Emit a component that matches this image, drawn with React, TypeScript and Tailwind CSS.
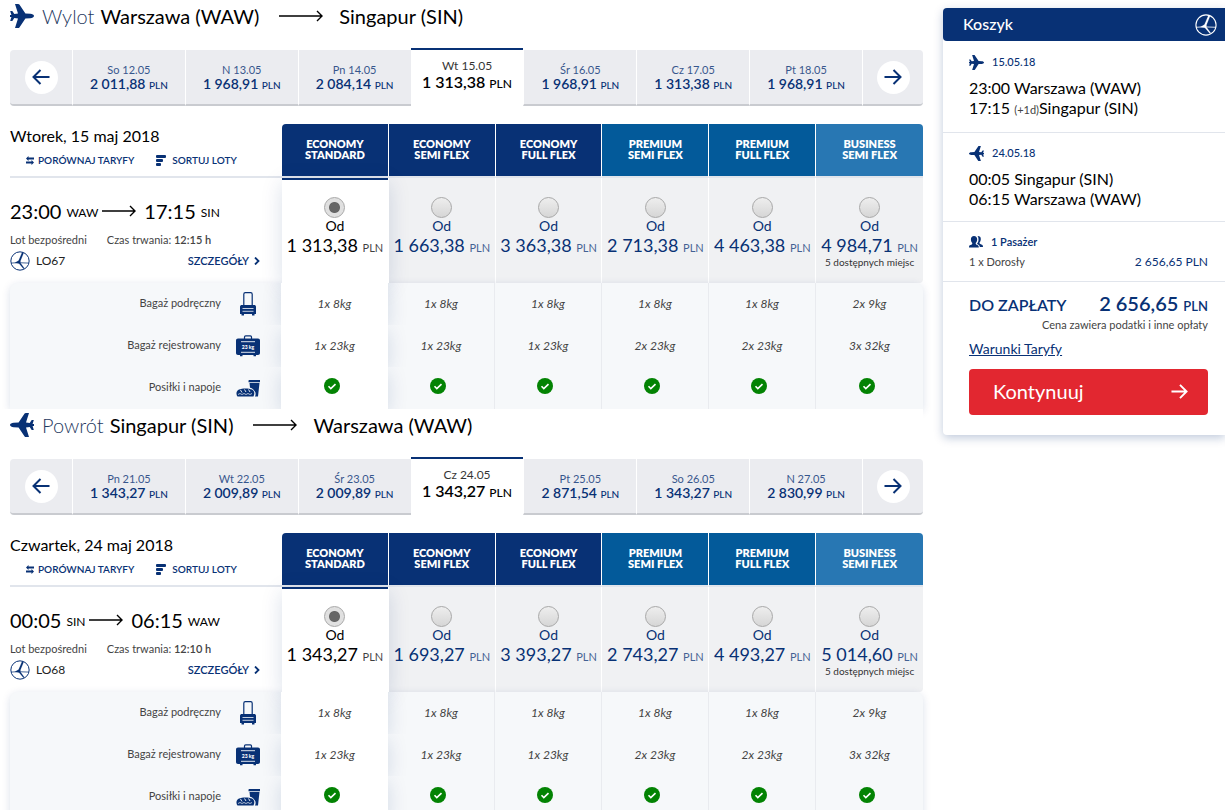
import { useState } from "react";
import clsx from "clsx";

type Fare = { name: string[]; color: string; price: string; seats?: string };

type Day = { label: string; price: string };

type Flight = {
  id: string;
  direction: string;
  inbound?: boolean;
  from: string;
  fromCode: string;
  to: string;
  toCode: string;
  days: Day[];
  date: string;
  departure: string;
  arrival: string;
  duration: string;
  number: string;
  fares: Fare[];
};

const fareTypes = [
  { name: ["ECONOMY", "STANDARD"], color: "bg-[#083175]" },
  { name: ["ECONOMY", "SEMI FLEX"], color: "bg-[#083175]" },
  { name: ["ECONOMY", "FULL FLEX"], color: "bg-[#083175]" },
  { name: ["PREMIUM", "SEMI FLEX"], color: "bg-[#035a9a]" },
  { name: ["PREMIUM", "FULL FLEX"], color: "bg-[#035a9a]" },
  { name: ["BUSINESS", "SEMI FLEX"], color: "bg-[#2877b3]" },
];

const withPrices = (prices: string[]): Fare[] =>
  fareTypes.map((fare, i) => ({
    ...fare,
    price: prices[i],
    seats: i === 5 ? "5 dostępnych miejsc" : undefined,
  }));

const flights: Flight[] = [
  {
    id: "outbound",
    direction: "Wylot",
    from: "Warszawa",
    fromCode: "WAW",
    to: "Singapur",
    toCode: "SIN",
    days: [
      { label: "So 12.05", price: "2 011,88" },
      { label: "N 13.05", price: "1 968,91" },
      { label: "Pn 14.05", price: "2 084,14" },
      { label: "Wt 15.05", price: "1 313,38" },
      { label: "Śr 16.05", price: "1 968,91" },
      { label: "Cz 17.05", price: "1 313,38" },
      { label: "Pt 18.05", price: "1 968,91" },
    ],
    date: "Wtorek, 15 maj 2018",
    departure: "23:00",
    arrival: "17:15",
    duration: "12:15 h",
    number: "LO67",
    fares: withPrices([
      "1 313,38",
      "1 663,38",
      "3 363,38",
      "2 713,38",
      "4 463,38",
      "4 984,71",
    ]),
  },
  {
    id: "inbound",
    direction: "Powrót",
    inbound: true,
    from: "Singapur",
    fromCode: "SIN",
    to: "Warszawa",
    toCode: "WAW",
    days: [
      { label: "Pn 21.05", price: "1 343,27" },
      { label: "Wt 22.05", price: "2 009,89" },
      { label: "Śr 23.05", price: "2 009,89" },
      { label: "Cz 24.05", price: "1 343,27" },
      { label: "Pt 25.05", price: "2 871,54" },
      { label: "So 26.05", price: "1 343,27" },
      { label: "N 27.05", price: "2 830,99" },
    ],
    date: "Czwartek, 24 maj 2018",
    departure: "00:05",
    arrival: "06:15",
    duration: "12:10 h",
    number: "LO68",
    fares: withPrices([
      "1 343,27",
      "1 693,27",
      "3 393,27",
      "2 743,27",
      "4 493,27",
      "5 014,60",
    ]),
  },
];

const handBaggage = ["1x 8kg", "1x 8kg", "1x 8kg", "1x 8kg", "1x 8kg", "2x 9kg"];
const checkedBaggage = [
  "1x 23kg",
  "1x 23kg",
  "1x 23kg",
  "2x 23kg",
  "2x 23kg",
  "3x 32kg",
];

function PlaneIcon({ className }: { className?: string }) {
  return (
    <svg viewBox="0 0 24 24" fill="currentColor" className={className}>
      <path d="M24 12c0 1.200-1.800 2.200-3.600 2.200l-5 .3L9.400 23.400C9.100 23.800 8.700 24 8.200 24H5l3-9.500-3.700-.5L2.300 17H.2L1.400 13H0v-2h1.400L.2 7h2.100l2 3L8 9.500 5 0h3.200c.5 0 .9.200 1.200.6l6 8.900 5 .3C22.200 9.800 24 10.800 24 12z" />
    </svg>
  );
}

function LongArrow({ className }: { className?: string }) {
  return (
    <svg
      viewBox="0 0 44 12"
      fill="none"
      stroke="currentColor"
      strokeWidth="1.4"
      preserveAspectRatio="xMaxYMid slice"
      className={className}
    >
      <path d="M0 6h43M38 1l5 5-5 5" />
    </svg>
  );
}

function ArrowIcon({ className }: { className?: string }) {
  return (
    <svg
      viewBox="0 0 18 18"
      fill="none"
      stroke="currentColor"
      className={className}
    >
      <path d="M0.500 9h16M9.500 2l7 7-7 7" />
    </svg>
  );
}

function CraneLogo({ className }: { className?: string }) {
  return (
    <svg viewBox="0 0 24 24" fill="none" stroke="currentColor" className={className}>
      <circle cx="12" cy="12" r="11" strokeWidth="1.200" />
      <path d="M1.500 14.500L9 14l13.500.500" strokeWidth="0.900" />
      <path
        d="M14.600 1.500L10.400 11.500 6 14.200l4.800.8 5.600 6.500.8-.8-4.800-6.600.2-2.400L16.400 2.300z"
        fill="currentColor"
        strokeWidth="0.200"
      />
    </svg>
  );
}

function TrolleyIcon() {
  return (
    <svg viewBox="0 0 24 24" className="size-6 text-[#083175]" fill="currentColor">
      <path
        d="M7.800 14V2.200C7.800 1.200 8.300.6 9.300.6h5.400c1 0 1.500.6 1.500 1.600V14"
        fill="none"
        stroke="currentColor"
        strokeWidth="1.200"
      />
      <path d="M6 13h12c1.200 0 2 .6 2 1.800V22h-1.500v1.500H16V22H8v1.500H5.500V22H4v-7.200C4 13.600 4.800 13 6 13z" />
      <path d="M6.500 16.500h11M6.500 19.300h11" stroke="#f6f8fa" strokeWidth="0.800" />
    </svg>
  );
}

function SuitcaseIcon() {
  return (
    <svg viewBox="0 0 24 24" className="size-6 text-[#083175]" fill="currentColor">
      <path
        d="M8.500 5V3c0-.8.500-1.200 1.200-1.200h4.600c.7 0 1.200.4 1.200 1.200v2"
        fill="none"
        stroke="currentColor"
        strokeWidth="1.200"
      />
      <path d="M2 4.500h20c1.200 0 2 .8 2 2V19c0 1.200-.8 2-2 2h-2v1.300h-2.500V21h-11v1.300H4V21H2c-1.200 0-2-.8-2-2V6.500c0-1.200.8-2 2-2z" />
      <path d="M5 7.700h14M5 18.300h14" stroke="#f6f8fa" strokeWidth="0.900" />
      <text
        x="12"
        y="15"
        textAnchor="middle"
        fill="#fff"
        fontSize="5"
        fontWeight="900"
      >
        23 kg
      </text>
    </svg>
  );
}

function MealIcon() {
  return (
    <svg viewBox="0 0 24 24" className="size-6 text-[#083175]" fill="currentColor">
      <path d="M13.500 4H24v2.200H12.500V5c0-.6.400-1 1-1zM13.500 7h10L22 20.500h-3c.8-1.500 1-4-.5-5.500C17.500 13 15.500 12 14 11.800z" />
      <path d="M3 13.500C6 12 13 12 16 13.500c2.800 1.500 2.800 4.500 1.500 7h-16C0 18.500-.2 15 3 13.500z" />
      <path
        d="M4.500 14l1.500 2.500M8.500 13.500l1.500 2.500M12.500 13.500l1.500 2.500"
        stroke="#f6f8fa"
        strokeWidth="0.900"
      />
      <path
        d="M2 18.500l2-1 2 1 2-1 2 1 2-1 2 1 2-1"
        fill="none"
        stroke="#f6f8fa"
        strokeWidth="0.700"
      />
    </svg>
  );
}

function CheckIcon() {
  return (
    <svg viewBox="0 0 16 16" className="size-4" role="img" aria-label="Tak">
      <circle cx="8" cy="8" r="8" fill="#038303" />
      <path d="M4.500 8.300l2.300 2.300 4.700-4.500" fill="none" stroke="#fff" strokeWidth="1.600" />
    </svg>
  );
}

function DayPicker({ days }: { days: Day[] }) {
  const [active, setActive] = useState(3);

  return (
    <div className="flex items-end text-[#083175]">
      <div className="flex h-14 w-[62px] items-center justify-center rounded-l border-b-2 border-[#c9cbd0] bg-[#ebecf0]">
        <button
          aria-label="Wcześniejsze dni"
          className="flex size-[33px] items-center justify-center rounded-full bg-white"
        >
          <ArrowIcon className="size-[18px] -scale-x-100 stroke-2" />
        </button>
      </div>
      <div className="grid flex-1 grid-cols-7 items-end">
        {days.map((day, i) => (
          <button
            key={day.label}
            onClick={() => setActive(i)}
            className={clsx(
              "flex min-w-0 flex-col items-center whitespace-nowrap",
              i === active
                ? "h-[58px] border-t-2 border-[#083175] bg-white pt-2 text-black"
                : "h-14 border-b-2 border-l border-b-[#c9cbd0] border-l-white bg-[#ebecf0] pt-3",
            )}
          >
            <span
              className={clsx(
                "leading-4 opacity-80",
                i === active ? "text-[12px]" : "text-[11px]",
              )}
            >
              {day.label}
            </span>
            <span
              className={clsx(
                "font-semibold",
                i === active ? "text-[16px] leading-4" : "text-[14px] leading-3",
              )}
            >
              {day.price}{" "}
              <span
                className={clsx(
                  "font-medium",
                  i === active ? "text-[12px]" : "text-[10px]",
                )}
              >
                PLN
              </span>
            </span>
          </button>
        ))}
      </div>
      <div className="flex h-14 w-[61px] items-center justify-center rounded-r border-b-2 border-l border-b-[#c9cbd0] border-l-white bg-[#ebecf0]">
        <button
          aria-label="Późniejsze dni"
          className="flex size-[33px] items-center justify-center rounded-full bg-white"
        >
          <ArrowIcon className="size-[18px] stroke-2" />
        </button>
      </div>
    </div>
  );
}

function FareTable({
  flight,
  selected,
  onSelect,
}: {
  flight: Flight;
  selected: number;
  onSelect: (index: number) => void;
}) {
  return (
    <table className="w-full table-fixed border-separate border-spacing-0">
      <colgroup>
        <col className="w-[272px]" />
        {flight.fares.map((fare, i) => (
          <col key={i} />
        ))}
      </colgroup>
      <thead>
        <tr>
          <td className="h-[54px] border-b-2 border-[#e1e5ec] p-0 align-top">
            <div className="pt-1 text-[16px] leading-4">{flight.date}</div>
            <div className="flex gap-[22px] pt-2 pl-4 text-[10px] leading-4 font-semibold text-[#083175]">
              <button className="flex items-center gap-1">
                <svg viewBox="0 0 8 9" className="h-[9px] w-2" fill="currentColor">
                  <path d="M0 2.500L2.500 0v1.500H8v2H2.500V5zM8 6.500L5.500 4v1.500H0v2h5.500V9z" />
                </svg>
                PORÓWNAJ TARYFY
              </button>
              <button className="flex items-center gap-[6px]">
                <svg viewBox="0 0 10 11" className="h-[11px] w-[10px]" fill="currentColor">
                  <rect width="10" height="3" rx="1" />
                  <rect y="4" width="7" height="3" rx="1" />
                  <rect y="8" width="5" height="3" rx="1" />
                </svg>
                SORTUJ LOTY
              </button>
            </div>
          </td>
          {flight.fares.map((fare, i) => (
            <th
              key={i}
              scope="col"
              className={clsx(
                "border-r border-b-2 border-r-white border-b-[#e1e5ec] bg-clip-padding p-0 pb-[2px] text-[11px] font-extrabold text-white last:border-r-0",
                fare.color,
                i === 0 && "rounded-tl",
                i === 5 && "rounded-tr",
              )}
            >
              <div className="leading-[11px]">{fare.name[0]}</div>
              <div className="leading-[11px]">{fare.name[1]}</div>
            </th>
          ))}
        </tr>
      </thead>
      <tbody>
        <tr>
          <th
            scope="row"
            className="h-[105px] p-0 pr-[22px] align-top font-normal"
          >
            <div className="flex items-center pt-[19px] text-[20px] leading-6">
              {flight.departure}
              <span className="pt-1 pl-[5px] text-[12px]">{flight.fromCode}</span>
              <LongArrow className="mx-1 h-3 w-[34px]" />
              <span className="pl-1">{flight.arrival}</span>
              <span className="pt-1 pl-[5px] text-[12px]">{flight.toCode}</span>
            </div>
            <div className="flex gap-5 pt-[7px] text-[11px] leading-4 text-[#444]">
              <span>Lot bezpośredni</span>
              <span>
                Czas trwania: <span className="font-semibold">{flight.duration}</span>
              </span>
            </div>
            <div className="flex items-center gap-[6px] pt-[3px] text-[12px] leading-5 text-[#222]">
              <CraneLogo className="size-5 text-[#083175]" />
              {flight.number}
              <button className="ml-auto flex items-center gap-[5px] text-[11px] font-semibold text-[#083175]">
                SZCZEGÓŁY
                <svg viewBox="0 0 6 8" className="h-2 w-[6px]" fill="none" stroke="currentColor" strokeWidth="1.800">
                  <path d="M1 0.500L4.500 4 1 7.500" />
                </svg>
              </button>
            </div>
          </th>
          {flight.fares.map((fare, i) => (
            <td
              key={i}
              className={clsx(
                "border-r border-white bg-clip-padding p-0 text-center align-top last:border-r-0",
                i === selected
                  ? "relative bg-white text-black shadow-[0_5px_20px_rgba(8,49,117,0.15)]"
                  : "bg-[#f0f1f3] text-[#083175]",
                i === 5 && "rounded-br",
              )}
            >
              <label
                className={clsx(
                  "flex flex-col items-center border-t-2 pt-[17px] whitespace-nowrap",
                  i === selected ? "border-[#083175]" : "border-transparent",
                )}
              >
                <input
                  type="radio"
                  name={flight.id}
                  checked={i === selected}
                  onChange={() => onSelect(i)}
                  className="size-[21px] appearance-none rounded-full border border-[#a8a8a8] bg-linear-to-b from-[#eee] to-[#d6d6d6] checked:bg-[radial-gradient(circle,#666_5px,#e0e0e0_6px)]"
                />
                <span className="text-[14px] leading-4">Od</span>
                <span className="text-[18px] leading-[22px]">
                  {fare.price}{" "}
                  <span className="text-[11px] leading-none opacity-75">PLN</span>
                </span>
                {fare.seats && (
                  <span className="text-[10px] leading-3 text-[#333]">
                    {fare.seats}
                  </span>
                )}
              </label>
            </td>
          ))}
        </tr>
      </tbody>
    </table>
  );
}

function AmenityTable({ selected }: { selected: number }) {
  const rows = [
    { label: "Bagaż podręczny", icon: <TrolleyIcon />, values: handBaggage },
    { label: "Bagaż rejestrowany", icon: <SuitcaseIcon />, values: checkedBaggage },
    { label: "Posiłki i napoje", icon: <MealIcon />, values: null },
  ];

  return (
    <div className="rounded-t-lg bg-[#f6f8fa] shadow-[0_2px_8px_rgba(8,49,117,0.15)]">
      <table className="w-full table-fixed border-separate border-spacing-0 text-[11px] text-[#444]">
        <colgroup>
          <col className="w-[271px]" />
          {fareTypes.map((fare, i) => (
            <col key={i} />
          ))}
        </colgroup>
        <tbody>
          {rows.map((row) => (
            <tr key={row.label}>
              <th scope="row" className="h-[42px] p-0 pr-[21px] pb-px font-normal">
                <div className="flex items-center justify-end gap-[15px]">
                  {row.label}
                  {row.icon}
                </div>
              </th>
              {fareTypes.map((fare, i) => (
                <td
                  key={i}
                  className={clsx(
                    "p-0 pb-px text-center text-[12px] italic",
                    i === selected
                      ? "relative bg-white shadow-[0_5px_20px_rgba(8,49,117,0.15)] [clip-path:inset(0_-24px)]"
                      : "border-r border-[#e9ebef] last:border-r-0",
                  )}
                >
                  {row.values ? (
                    row.values[i]
                  ) : (
                    <div className="flex justify-center pr-[6px] pb-[3px]">
                      <CheckIcon />
                    </div>
                  )}
                </td>
              ))}
            </tr>
          ))}
        </tbody>
      </table>
    </div>
  );
}

function FlightSection({ flight }: { flight: Flight }) {
  const [selected, setSelected] = useState(0);

  return (
    <section className="relative bg-white pl-[10px]">
      <h2 className="flex h-12 items-start pt-1 text-[20px] leading-6">
        <PlaneIcon
          className={clsx(
            "size-6 text-[#083175]",
            flight.inbound && "-scale-x-100",
          )}
        />
        <span className="pr-[6px] pl-2 font-light text-[#1f3a5f]">
          {flight.direction}
        </span>
        <span>
          {flight.from} ({flight.fromCode})
        </span>
        <LongArrow className="mr-4 ml-5 mt-[6px] h-3 w-11" />
        <span>
          {flight.to} ({flight.toCode})
        </span>
      </h2>
      <DayPicker days={flight.days} />
      <div className="pt-[18px]">
        <FareTable flight={flight} selected={selected} onSelect={setSelected} />
        <AmenityTable selected={selected} />
      </div>
    </section>
  );
}

function BasketFlight({
  date,
  inbound,
  children,
}: {
  date: string;
  inbound?: boolean;
  children: React.ReactNode;
}) {
  return (
    <div className="border-b border-[#e1e5ec] px-[26px] pt-[11px] pb-3">
      <div className="flex items-center gap-2 text-[11px] leading-[18px] font-medium text-[#083175]">
        <PlaneIcon className={clsx("size-[15px]", inbound && "-scale-x-100")} />
        {date}
      </div>
      <div className="pt-[7px] text-[16px] leading-5">{children}</div>
    </div>
  );
}

function Basket() {
  return (
    <aside className="mt-2 w-[282px] shrink-0 self-start rounded-l bg-white shadow-[0_3px_10px_rgba(8,49,117,0.25)]">
      <div className="mb-px flex h-[33px] items-center justify-between rounded-l bg-[#083175] pr-2 pl-5 text-white">
        <h2 className="pb-[2px] text-[16px] leading-5 font-medium">Koszyk</h2>
        <CraneLogo className="size-[22px]" />
      </div>
      <BasketFlight date="15.05.18">
        23:00 Warszawa (WAW)
        <br />
        17:15 <span className="text-[11px] text-[#444]">(+1d)</span>Singapur (SIN)
      </BasketFlight>
      <BasketFlight date="24.05.18" inbound>
        00:05 Singapur (SIN)
        <br />
        06:15 Warszawa (WAW)
      </BasketFlight>
      <div className="border-b border-[#e1e5ec] pt-[11px] pr-[17px] pb-[10px] pl-[26px] text-[11px]">
        <div className="flex items-center gap-2 leading-[18px] font-semibold text-[#083175]">
          <svg viewBox="0 0 14 12" className="h-3 w-[14px]" fill="currentColor">
            <path d="M5 0c2 0 3.200 1.300 3.200 3.200S7.300 6.500 6.700 7c0 1.200.3 1.500 1.800 2 1 .4 1.300 1.200 1.300 2.500H0C0 10 .3 9.400 1.500 9 3 8.500 3.300 8.200 3.300 7 2.400 6.200 1.900 4.700 1.900 3.200 1.900 1.300 3 0 5 0z" />
            <path d="M8.500 0c2.300 0 3.500 1 3.300 3.300-.1 1.500-.6 2.700-1.300 3.300 0 1 .3 1.500 1.800 2 1.200.4 1.700 1 1.700 2.400h-3.200c-.1-1.500-.8-2.200-2.300-2.800-.5-.2-.5-.6-.2-1 .9-1 1.300-2.400 1.200-4C9.400 1.700 9.200.8 8.500 0z" />
          </svg>
          1 Pasażer
        </div>
        <div className="flex justify-between pt-[2px] leading-[18px]">
          <span className="text-[#444]">1 x Dorosły</span>
          <span className="text-[12px] text-[#083175]">2 656,65 PLN</span>
        </div>
      </div>
      <div className="pt-[10px] pr-[17px] pb-5 pl-[26px]">
        <div className="flex items-baseline justify-between leading-[22px] font-semibold text-[#083175]">
          <span className="text-[16px]">DO ZAPŁATY</span>
          <span className="text-[20px]">
            2 656,65 <span className="text-[13px]">PLN</span>
          </span>
        </div>
        <div className="text-right text-[11px] leading-4 text-[#444]">
          Cena zawiera podatki i inne opłaty
        </div>
        <a href="#" className="mt-[6px] block text-[14px] leading-5 text-[#083175] underline">
          Warunki Taryfy
        </a>
        <button className="mt-[10px] flex h-[46px] w-full items-center justify-between rounded bg-[#e22730] pr-5 pb-[2px] pl-6 text-[20px] text-white">
          Kontynuuj
          <ArrowIcon className="size-[17px] stroke-2" />
        </button>
      </div>
    </aside>
  );
}

export default function App() {
  return (
    <div className="flex gap-5 overflow-hidden bg-white font-['Lato',sans-serif] text-black">
      <main className="flex min-w-0 flex-1 flex-col">
        {flights.map((flight) => (
          <FlightSection key={flight.id} flight={flight} />
        ))}
      </main>
      <Basket />
    </div>
  );
}
